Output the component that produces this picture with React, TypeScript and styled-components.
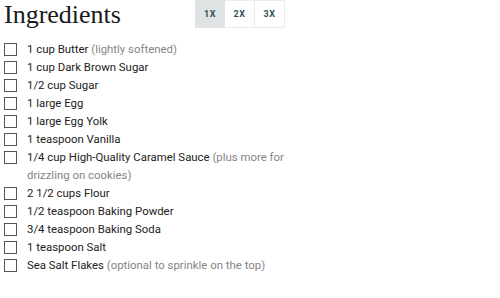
import React from "react";
import styled, { createGlobalStyle } from "styled-components";

const Global = createGlobalStyle`
  html, body { margin: 0; padding: 0; background: #fff; }
  body { font-family: Roboto, "Noto Sans", sans-serif; }
`;

const Wrap = styled.div`
  width: 500px;
  height: 298px;
  padding: 0 4px;
  box-sizing: border-box;
  overflow: hidden;
`;

const Header = styled.div`
  display: flex;
  align-items: flex-start;
  height: 40px;
`;

const Title = styled.h2`
  margin: 0;
  width: 191px;
  font-family: "Liberation Serif", "DejaVu Serif", serif;
  font-weight: 400;
  font-size: 26px;
  line-height: 30px;
  color: #1a1a1a;
`;

const Scale = styled.div`
  display: flex;
`;

const ScaleBtn = styled.button<{ $active?: boolean }>`
  width: 30px;
  height: 28px;
  padding: 0;
  margin: 0;
  border: 1px solid ${(p) => (p.$active ? "#dfe3e3" : "#ececec")};
  border-left: ${(p) => (p.$active ? "1px solid #dfe3e3" : "none")};
  background: ${(p) => (p.$active ? "#dfe3e3" : "#fff")};
  color: #2f5156;
  font-family: Roboto, sans-serif;
  font-weight: 700;
  font-size: 9px;
  letter-spacing: 0.6px;
`;

const List = styled.ul`
  list-style: none;
  margin: 0;
  padding: 0;
`;

const Item = styled.li`
  display: flex;
  align-items: flex-start;
  font-size: 11.4px;
  line-height: 18px;
  color: #222;
`;

const Box = styled.span`
  flex: none;
  width: 11px;
  height: 11px;
  border: 1px solid #555;
  margin-top: 2.5px;
  margin-right: 10px;
`;

const Text = styled.span`
  width: 262px;
`;

const Note = styled.span`
  color: #858585;
`;

const items: [string, string?][] = [
  ["1 cup Butter", "(lightly softened)"],
  ["1 cup Dark Brown Sugar"],
  ["1/2 cup Sugar"],
  ["1 large Egg"],
  ["1 large Egg Yolk"],
  ["1 teaspoon Vanilla"],
  ["1/4 cup High-Quality Caramel Sauce", "(plus more for drizzling on cookies)"],
  ["2 1/2 cups Flour"],
  ["1/2 teaspoon Baking Powder"],
  ["3/4 teaspoon Baking Soda"],
  ["1 teaspoon Salt"],
  ["Sea Salt Flakes", "(optional to sprinkle on the top)"],
];

export default function App() {
  return (
    <Wrap>
      <Global />
      <Header>
        <Title>Ingredients</Title>
        <Scale>
          <ScaleBtn $active>1X</ScaleBtn>
          <ScaleBtn>2X</ScaleBtn>
          <ScaleBtn>3X</ScaleBtn>
        </Scale>
      </Header>
      <List>
        {items.map(([main, note], i) => (
          <Item key={i}>
            <Box />
            <Text>
              {main}
              {note ? <> <Note>{note}</Note></> : null}
            </Text>
          </Item>
        ))}
      </List>
    </Wrap>
  );
}
